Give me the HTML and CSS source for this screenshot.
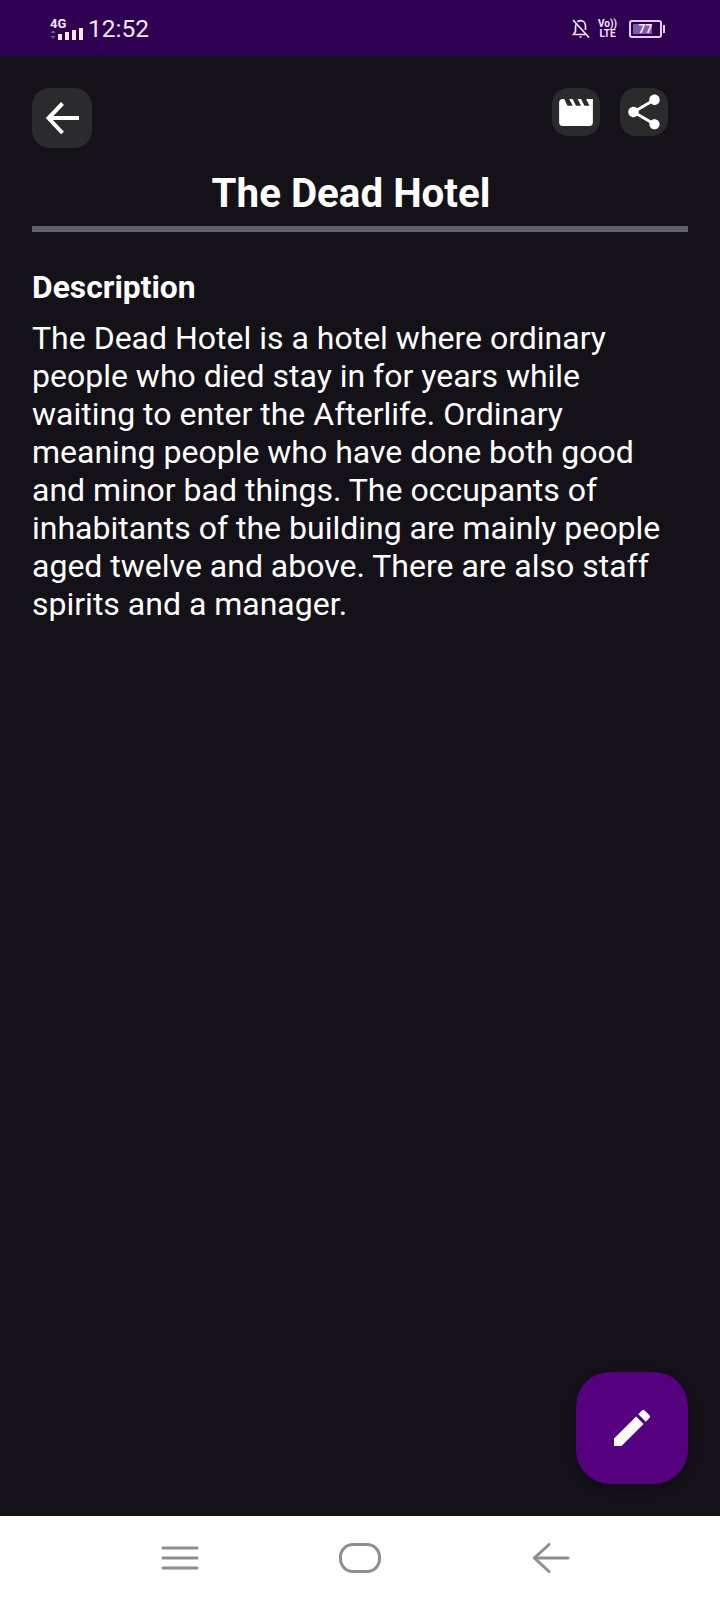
FILE: index.html
```html
<!DOCTYPE html>
<html lang="en">

<head>
    <meta charset="UTF-8">
    <meta name="viewport" content="width=device-width, initial-scale=1.0">
    <title>The Dead Hotel</title>
    <link rel="stylesheet" href="styles.css">
</head>

<body>
    <div class="phone">
        <!-- Status bar -->
        <div class="status">
            <div class="status-left">
                <svg class="signal" width="34" height="24" viewBox="0 0 34 24">
                    <text x="0" y="11" class="net">4G</text>
                    <path d="M3 13l2.500 3h-5zM3 22l2.500-3h-5z" fill="#7a4fa8"/>
                    <rect x="8" y="17" width="4" height="6" fill="#f3e8fb"/>
                    <rect x="15" y="15" width="4" height="8" fill="#f3e8fb"/>
                    <rect x="22" y="13" width="4" height="10" fill="#f3e8fb"/>
                    <rect x="29" y="11" width="4" height="12" fill="#f3e8fb"/>
                </svg>
                <span class="clock">12:52</span>
            </div>
            <div class="status-right">
                <svg width="18" height="20" viewBox="0 0 18 20" fill="none" stroke="#f3e8fb" stroke-width="1.7">
                    <path d="M4 5.500C3.600 6.500 3.500 7.500 3.500 8.500V12.500L1.500 15.500H13.500"/>
                    <path d="M5.500 2.800C6.500 2 7.500 1.700 8.500 1.700C11.500 1.700 13.500 4 13.500 7V11"/>
                    <path d="M1 1L17 18.500"/>
                    <path d="M7.500 18H9.500" stroke-width="1.500"/>
                </svg>
                <div class="volte">
                    <span>Vo))</span>
                    <span>LTE</span>
                </div>
                <div class="battery">
                    <div class="battery-body">
                        <div class="battery-fill"></div>
                        <span class="battery-text">77</span>
                    </div>
                    <div class="battery-tip"></div>
                </div>
            </div>
        </div>

        <!-- Contenido -->
        <main class="content">
            <div class="toolbar">
                <button class="btn btn-back">
                    <svg width="36" height="36" viewBox="0 0 36 36" fill="none" stroke="#fff" stroke-width="4">
                        <path d="M35 18H5"/>
                        <path d="M18.500 3.500L4.500 18L18.500 33"/>
                    </svg>
                </button>
                <div class="toolbar-right">
                    <button class="btn">
                        <svg width="34" height="27" viewBox="2 4 20 16">
                            <path fill="#fff" d="M18 4l2 4h-3l-2-4h-2l2 4h-3l-2-4H8l2 4H7L5 4H4c-1.100 0-2 .9-2 2v12c0 1.100.9 2 2 2h16c1.100 0 2-.9 2-2V4h-4z"/>
                        </svg>
                    </button>
                    <button class="btn">
                        <svg width="42" height="42" viewBox="0 0 24 24">
                            <path fill="#fff" d="M18 16.080c-.76 0-1.440.3-1.960.77L8.910 12.700c.05-.23.09-.46.09-.7s-.04-.47-.09-.7l7.050-4.110c.54.5 1.250.81 2.040.81 1.660 0 3-1.340 3-3s-1.340-3-3-3-3 1.340-3 3c0 .24.04.47.09.7L8.040 9.810C7.500 9.310 6.790 9 6 9c-1.660 0-3 1.340-3 3s1.340 3 3 3c.79 0 1.500-.31 2.040-.81l7.120 4.160c-.05.21-.08.43-.08.65 0 1.610 1.310 2.920 2.920 2.920 1.610 0 2.920-1.310 2.920-2.920s-1.310-2.920-2.920-2.920z"/>
                        </svg>
                    </button>
                </div>
            </div>

            <h1 class="title">The Dead Hotel</h1>
            <hr class="line">

            <h2 class="subtitle">Description</h2>
            <p class="description">The Dead Hotel is a hotel where ordinary people who died stay in for years while waiting to enter the Afterlife. Ordinary meaning people who have done both good and minor bad things. The occupants of inhabitants of the building are mainly people aged twelve and above. There are also staff spirits and a manager.</p>

            <button class="fab">
                <svg width="48" height="48" viewBox="0 0 24 24">
                    <path fill="#fff" d="M3 17.250V21h3.750L17.810 9.940l-3.750-3.750L3 17.250zM20.710 7.040c.39-.39.39-1.020 0-1.410l-2.340-2.340c-.39-.39-1.020-.39-1.410 0l-1.830 1.830 3.750 3.750 1.830-1.830z"/>
                </svg>
            </button>
        </main>

        <!-- Barra de navegacion -->
        <nav class="navbar">
            <svg width="38" height="26" viewBox="0 0 38 26" stroke="#8e8e8e" stroke-width="3" stroke-linecap="round">
                <path d="M2 3H36M2 13H36M2 23H36"/>
            </svg>
            <div class="nav-home"></div>
            <svg width="38" height="30" viewBox="0 0 38 30" fill="none" stroke="#8e8e8e" stroke-width="3" stroke-linecap="round">
                <path d="M36 15H3"/>
                <path d="M17 1.500L2.500 15L17 28.500"/>
            </svg>
        </nav>
    </div>
</body>

</html>
```
FILE: styles.css
```css
* {
    box-sizing: border-box;
}

body {
    margin: 0;
    font-family: Roboto, "Liberation Sans", sans-serif;
    background-color: #141218;
}

.phone {
    display: flex;
    flex-direction: column;
    height: 1600px;
}

/* Status bar */
.status {
    display: flex;
    justify-content: space-between;
    align-items: center;
    height: 56px;
    padding: 2px 55px 0 50px;
    background-color: #2f0052;
    color: #f3e8fb;
}

.status-left,
.status-right {
    display: flex;
    align-items: center;
}

.status-left {
    gap: 4px;
}

.status-right {
    gap: 8px;
}

.net {
    font-size: 13px;
    font-weight: 700;
    fill: #f3e8fb;
}

.clock {
    font-size: 24.500px;
    line-height: 28px;
}

.volte {
    display: flex;
    flex-direction: column;
    font-size: 10px;
    font-weight: 700;
    line-height: 10px;
    text-align: center;
}

.battery {
    display: flex;
    align-items: center;
    margin-left: 4px;
}

.battery-body {
    position: relative;
    width: 33px;
    height: 18px;
    border: 2px solid #e3cdf0;
    border-radius: 3px;
    padding: 2px;
}

.battery-fill {
    width: 77%;
    height: 100%;
    background-color: #7b5aa6;
}

.battery-text {
    position: absolute;
    top: 0;
    left: 0;
    width: 100%;
    font-size: 12px;
    font-weight: 700;
    line-height: 14px;
    text-align: center;
}

.battery-tip {
    width: 2px;
    height: 8px;
    margin-left: 1px;
    background-color: #e3cdf0;
}

/* Contenido */
.content {
    position: relative;
    flex: 1;
    padding: 32px 32px 0;
}

.toolbar {
    display: flex;
    justify-content: space-between;
    align-items: flex-start;
    padding-right: 20px;
}

.toolbar-right {
    display: flex;
    gap: 20px;
}

.btn {
    display: flex;
    justify-content: center;
    align-items: center;
    width: 48px;
    height: 48px;
    padding: 0;
    border: none;
    border-radius: 16px;
    background-color: #2b2b2d;
}

.btn-back {
    width: 60px;
    height: 60px;
    border-radius: 18px;
}

.title {
    margin: 18px 0 0;
    padding-right: 18px;
    font-size: 40.300px;
    font-weight: 700;
    line-height: 56px;
    text-align: center;
    color: #fff;
}

.line {
    height: 6px;
    margin: 4px 0 0;
    border: none;
    background-color: #63636f;
}

.subtitle {
    margin: 35px 0 0;
    font-size: 31.800px;
    font-weight: 700;
    line-height: 40px;
    color: #fff;
}

.description {
    margin: 12px 0 0;
    font-size: 32px;
    line-height: 38px;
    color: #fff;
}

.fab {
    position: absolute;
    right: 32px;
    bottom: 32px;
    display: flex;
    justify-content: center;
    align-items: center;
    width: 112px;
    height: 112px;
    padding: 0;
    border: none;
    border-radius: 34px;
    background-color: #55007f;
    box-shadow: 0 4px 10px rgba(0, 0, 0, 0.3);
}

/* Barra de navegacion */
.navbar {
    display: flex;
    align-items: center;
    height: 84px;
    padding-left: 161px;
    background-color: #fff;
}

.nav-home {
    width: 42px;
    height: 30px;
    margin: 0 151px 0 140px;
    border: 3px solid #8e8e8e;
    border-radius: 14px;
}
```
